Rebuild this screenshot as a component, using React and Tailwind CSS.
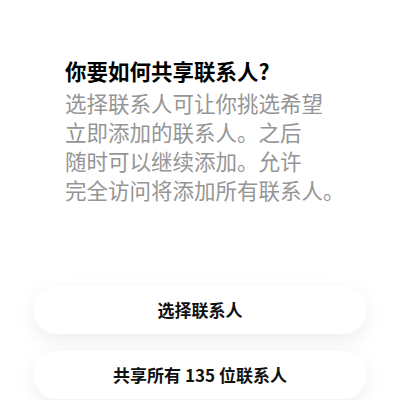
import React from 'react';

const lines = [
  '选择联系人可让你挑选希望',
  '立即添加的联系人。之后',
  '随时可以继续添加。允许',
  '完全访问将添加所有联系人。',
];

export default function App() {
  return (
    <div
      className="w-[400px] h-[400px] bg-white overflow-hidden flex flex-col"
      style={{ fontFamily: '"Noto Sans CJK SC", "Noto Sans", sans-serif' }}
    >
      <div className="pl-[65px] pt-[56px]">
        <h1 className="text-[21.5px] leading-[30px] font-bold text-black whitespace-nowrap">你要如何共享联系人?</h1>
        <div className="mt-[2px] text-[21.5px] leading-[29px] text-[#959595]">
          {lines.map((l, i) => (
            <p key={i} className="whitespace-nowrap">{l}</p>
          ))}
        </div>
      </div>

      <div className="mt-[82px] mx-[33px] flex flex-col gap-[17px]">
        <button className="h-[48px] rounded-full bg-white shadow-[0_6px_20px_rgba(0,0,0,0.07)] text-[17px] font-bold text-[#111]">
          选择联系人
        </button>
        <button className="h-[48px] rounded-full bg-white shadow-[0_6px_20px_rgba(0,0,0,0.07)] text-[17px] font-bold text-[#111]">
          共享所有 135 位联系人
        </button>
      </div>
    </div>
  );
}
